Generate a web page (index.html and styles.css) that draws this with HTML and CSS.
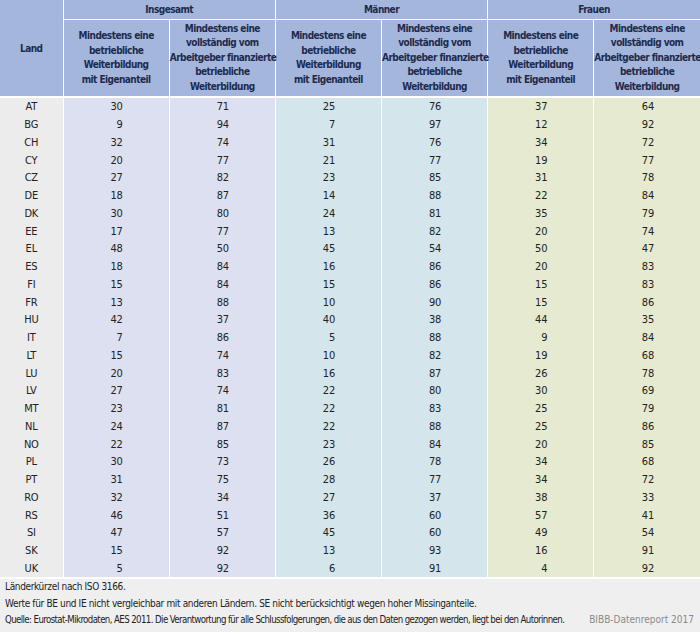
FILE: index.html
```html
<!DOCTYPE html>
<html lang="de">
<head>
<meta charset="utf-8">
<title>Tabelle</title>
<link rel="stylesheet" href="styles.css">
</head>
<body>
<div class="wrap">
<table class="tbl">
<colgroup>
<col class="c-land">
<col class="c-d"><col class="c-d"><col class="c-d"><col class="c-d"><col class="c-d"><col class="c-d">
</colgroup>
<thead>
<tr>
<th rowspan="2" class="h-land">Land</th>
<th colspan="2" class="h-grp">Insgesamt</th>
<th colspan="2" class="h-grp">Männer</th>
<th colspan="2" class="h-grp">Frauen</th>
</tr>
<tr class="h-sub">
<th>Mindestens eine<br>betriebliche<br>Weiterbildung<br>mit Eigenanteil</th>
<th>Mindestens eine<br>vollständig vom<br>Arbeitgeber finanzierte<br>betriebliche<br>Weiterbildung</th>
<th>Mindestens eine<br>betriebliche<br>Weiterbildung<br>mit Eigenanteil</th>
<th>Mindestens eine<br>vollständig vom<br>Arbeitgeber finanzierte<br>betriebliche<br>Weiterbildung</th>
<th>Mindestens eine<br>betriebliche<br>Weiterbildung<br>mit Eigenanteil</th>
<th>Mindestens eine<br>vollständig vom<br>Arbeitgeber finanzierte<br>betriebliche<br>Weiterbildung</th>
</tr>
</thead>
<tbody>
<tr><td class="land">AT</td><td class="g">30</td><td class="g">71</td><td class="m">25</td><td class="m">76</td><td class="f">37</td><td class="f">64</td></tr>
<tr><td class="land">BG</td><td class="g">9</td><td class="g">94</td><td class="m">7</td><td class="m">97</td><td class="f">12</td><td class="f">92</td></tr>
<tr><td class="land">CH</td><td class="g">32</td><td class="g">74</td><td class="m">31</td><td class="m">76</td><td class="f">34</td><td class="f">72</td></tr>
<tr><td class="land">CY</td><td class="g">20</td><td class="g">77</td><td class="m">21</td><td class="m">77</td><td class="f">19</td><td class="f">77</td></tr>
<tr><td class="land">CZ</td><td class="g">27</td><td class="g">82</td><td class="m">23</td><td class="m">85</td><td class="f">31</td><td class="f">78</td></tr>
<tr><td class="land">DE</td><td class="g">18</td><td class="g">87</td><td class="m">14</td><td class="m">88</td><td class="f">22</td><td class="f">84</td></tr>
<tr><td class="land">DK</td><td class="g">30</td><td class="g">80</td><td class="m">24</td><td class="m">81</td><td class="f">35</td><td class="f">79</td></tr>
<tr><td class="land">EE</td><td class="g">17</td><td class="g">77</td><td class="m">13</td><td class="m">82</td><td class="f">20</td><td class="f">74</td></tr>
<tr><td class="land">EL</td><td class="g">48</td><td class="g">50</td><td class="m">45</td><td class="m">54</td><td class="f">50</td><td class="f">47</td></tr>
<tr><td class="land">ES</td><td class="g">18</td><td class="g">84</td><td class="m">16</td><td class="m">86</td><td class="f">20</td><td class="f">83</td></tr>
<tr><td class="land">FI</td><td class="g">15</td><td class="g">84</td><td class="m">15</td><td class="m">86</td><td class="f">15</td><td class="f">83</td></tr>
<tr><td class="land">FR</td><td class="g">13</td><td class="g">88</td><td class="m">10</td><td class="m">90</td><td class="f">15</td><td class="f">86</td></tr>
<tr><td class="land">HU</td><td class="g">42</td><td class="g">37</td><td class="m">40</td><td class="m">38</td><td class="f">44</td><td class="f">35</td></tr>
<tr><td class="land">IT</td><td class="g">7</td><td class="g">86</td><td class="m">5</td><td class="m">88</td><td class="f">9</td><td class="f">84</td></tr>
<tr><td class="land">LT</td><td class="g">15</td><td class="g">74</td><td class="m">10</td><td class="m">82</td><td class="f">19</td><td class="f">68</td></tr>
<tr><td class="land">LU</td><td class="g">20</td><td class="g">83</td><td class="m">16</td><td class="m">87</td><td class="f">26</td><td class="f">78</td></tr>
<tr><td class="land">LV</td><td class="g">27</td><td class="g">74</td><td class="m">22</td><td class="m">80</td><td class="f">30</td><td class="f">69</td></tr>
<tr><td class="land">MT</td><td class="g">23</td><td class="g">81</td><td class="m">22</td><td class="m">83</td><td class="f">25</td><td class="f">79</td></tr>
<tr><td class="land">NL</td><td class="g">24</td><td class="g">87</td><td class="m">22</td><td class="m">88</td><td class="f">25</td><td class="f">86</td></tr>
<tr><td class="land">NO</td><td class="g">22</td><td class="g">85</td><td class="m">23</td><td class="m">84</td><td class="f">20</td><td class="f">85</td></tr>
<tr><td class="land">PL</td><td class="g">30</td><td class="g">73</td><td class="m">26</td><td class="m">78</td><td class="f">34</td><td class="f">68</td></tr>
<tr><td class="land">PT</td><td class="g">31</td><td class="g">75</td><td class="m">28</td><td class="m">77</td><td class="f">34</td><td class="f">72</td></tr>
<tr><td class="land">RO</td><td class="g">32</td><td class="g">34</td><td class="m">27</td><td class="m">37</td><td class="f">38</td><td class="f">33</td></tr>
<tr><td class="land">RS</td><td class="g">46</td><td class="g">51</td><td class="m">36</td><td class="m">60</td><td class="f">57</td><td class="f">41</td></tr>
<tr><td class="land">SI</td><td class="g">47</td><td class="g">57</td><td class="m">45</td><td class="m">60</td><td class="f">49</td><td class="f">54</td></tr>
<tr><td class="land">SK</td><td class="g">15</td><td class="g">92</td><td class="m">13</td><td class="m">93</td><td class="f">16</td><td class="f">91</td></tr>
<tr><td class="land">UK</td><td class="g">5</td><td class="g">92</td><td class="m">6</td><td class="m">91</td><td class="f">4</td><td class="f">92</td></tr>
</tbody>
</table>
<div class="foot">
<p>Länderkürzel nach ISO 3166.</p>
<p>Werte für BE und IE nicht vergleichbar mit anderen Ländern. SE nicht berücksichtigt wegen hoher Missinganteile.</p>
<p class="src"><span class="src-text">Quelle: Eurostat-Mikrodaten, AES 2011. Die Verantwortung für alle Schlussfolgerungen, die aus den Daten gezogen werden, liegt bei den Autorinnen.</span><span class="brand">BIBB-Datenreport 2017</span></p>
</div>
</div>
</body>
</html>
```
FILE: styles.css
```css
html, body {
  margin: 0;
  padding: 0;
  background: #ffffff;
}
body {
  font-family: "DejaVu Sans Condensed", "DejaVu Sans", sans-serif;
  color: #222;
}
.wrap {
  width: 700px;
}
.tbl {
  width: 700px;
  border-collapse: collapse;
  table-layout: fixed;
}
.c-land { width: 63px; }
.c-d { width: 106px; }
.tbl th {
  background: #a4b6dc;
  color: #1d2b4c;
  font-weight: bold;
  font-size: 10px;
  letter-spacing: -0.55px;
  border: 1px solid #ffffff;
  border-top: none;
  text-align: center;
  vertical-align: middle;
  padding: 0;
  white-space: nowrap;
}
.tbl th:first-child { border-left: none; }
.tbl th:last-child { border-right: none; }
.h-grp {
  height: 19px;
}
.h-sub th {
  height: 76px;
  line-height: 14.5px;
}
.h-sub th:last-child { border-right: none; }
.tbl td {
  font-size: 11px;
  letter-spacing: -0.2px;
  height: 17.75px;
  padding: 0;
  border-left: 1px solid #ffffff;
  border-right: 1px solid #ffffff;
  text-align: right;
  padding-right: 46px;
  color: #222;
}
.tbl td:first-child { border-left: none; }
.tbl td:last-child { border-right: none; }
.tbl td.land {
  background: #ececec;
  text-align: center;
  padding-right: 0;
}
.tbl td.g { background: #dde0f1; }
.tbl td.m { background: #d4e5eb; }
.tbl td.f { background: #e6ead0; }
.tbl tbody tr:first-child td { border-top: 2px solid #ffffff; }
.foot {
  background: #efefef;
  border-top: 2px solid #ffffff;
  padding: 0 6px 3px 5px;
  font-size: 10px;
  letter-spacing: -0.35px;
  color: #222;
}
.foot p {
  margin: 0;
  line-height: 16.5px;
  white-space: nowrap;
}
.foot .src {
  display: flex;
  justify-content: space-between;
}
.foot .src-text {
  font-size: 9.6px;
  letter-spacing: -0.6px;
}
.foot .brand {
  color: #8a8a8a;
  letter-spacing: 0;
}
```
